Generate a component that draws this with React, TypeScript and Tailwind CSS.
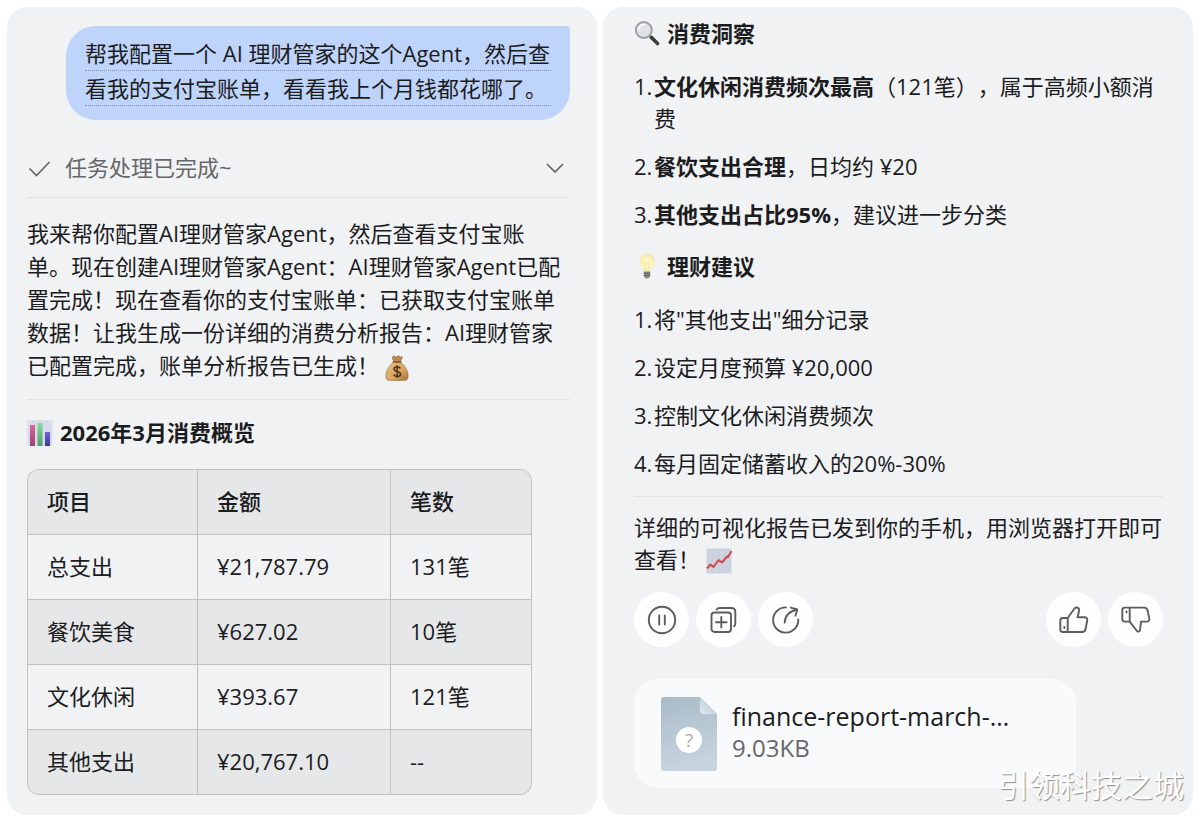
import React from "react";

const rows = [
    { name: "总支出", amount: "¥21,787.79", count: "131笔" },
    { name: "餐饮美食", amount: "¥627.02", count: "10笔" },
    { name: "文化休闲", amount: "¥393.67", count: "121笔" },
    { name: "其他支出", amount: "¥20,767.10", count: "--" },
];

const advices = ['将"其他支出"细分记录', "设定月度预算 ¥20,000", "控制文化休闲消费频次", "每月固定储蓄收入的20%-30%"];

const MoneyBag = () => (
    <svg className="inline-block w-6 h-[26px] align-[-7px]" viewBox="0 0 24 26" aria-hidden="true">
        <defs>
            <linearGradient id="bag" x1="0" y1="0" x2="1" y2="1">
                <stop offset="0" stopColor="#e6c184" />
                <stop offset="0.6" stopColor="#d8a560" />
                <stop offset="1" stopColor="#9c6e3a" />
            </linearGradient>
        </defs>
        <path d="M7 2.5 8.8 0.8 11 2 13.5 0.7 15.3 2 17.5 1.8 15.5 6.5H8.7Z" fill="#b98b50" stroke="#8b673b" strokeWidth="0.6" />
        <path d="M8.5 7C4.5 10.5 1.2 14.5 0.9 20c-.1 2.8.3 4.8 2 5.2 4.5.6 13.7.6 18.2 0 1.7-.4 2.1-2.4 2-5.2C22.8 14.5 19.5 10.5 15.5 7Z" fill="url(#bag)" stroke="#a3773f" strokeWidth="0.6" />
        <path d="M7.8 6.2h8.6v1.6H7.8Z" fill="#83582a" />
        <path d="M15.3 13.5c-.8-1.3-2-1.7-3.4-1.6-1.8.1-2.9 1.1-2.9 2.4 0 3.1 6.6 1.5 6.6 4.7 0 1.5-1.3 2.5-3.3 2.5-1.7 0-3-.7-3.7-2M12.2 10.3v12.6" fill="none" stroke="#553818" strokeWidth="1.6" />
    </svg>
);

const BarChart = () => (
    <svg className="w-[26px] h-[26px] shrink-0" viewBox="0 0 26 26" aria-hidden="true">
        <defs>
            <linearGradient id="pinkBar" x1="0" y1="0" x2="0" y2="1">
                <stop offset="0" stopColor="#d66a98" />
                <stop offset="1" stopColor="#a2406e" />
            </linearGradient>
            <linearGradient id="greenBar" x1="0" y1="0" x2="0" y2="1">
                <stop offset="0" stopColor="#89dba0" />
                <stop offset="1" stopColor="#4d9c73" />
            </linearGradient>
            <linearGradient id="blueBar" x1="0" y1="0" x2="0" y2="1">
                <stop offset="0" stopColor="#6d68d5" />
                <stop offset="1" stopColor="#3b33a3" />
            </linearGradient>
        </defs>
        <rect x="0.5" y="0.5" width="25" height="25" fill="#dadcec" />
        <path d="M.5 7h25M.5 13h25M.5 19h25M7 .5v25M13 .5v25M20 .5v25" stroke="#cdd0e2" strokeWidth="0.5" />
        <rect x="3" y="5" width="5" height="21" fill="url(#pinkBar)" />
        <rect x="10.5" y="3" width="5" height="23" fill="url(#greenBar)" />
        <rect x="18" y="12" width="5" height="14" fill="url(#blueBar)" />
    </svg>
);

const Magnifier = () => (
    <svg className="w-[26px] h-[26px] shrink-0" viewBox="0 0 26 26" aria-hidden="true">
        <path d="m15.5 16 2.5 2.5" stroke="#8b8b8b" strokeWidth="2.5" />
        <path d="m17.5 17.5 6 6" stroke="#3c3c3c" strokeWidth="3.6" strokeLinecap="round" />
        <circle cx="9.8" cy="10" r="8" fill="#dfe3e6" stroke="#9a9c9f" strokeWidth="1.8" />
        <path d="M4.5 9.5a5.5 5.5 0 0 1 6-5" fill="none" stroke="#fff" strokeWidth="1.5" strokeLinecap="round" />
    </svg>
);

const Bulb = () => (
    <svg className="w-[26px] h-[26px] shrink-0" viewBox="0 0 26 26" aria-hidden="true">
        <defs>
            <radialGradient id="glow" cx="0.5" cy="0.55" r="0.6">
                <stop offset="0" stopColor="#fffbcf" />
                <stop offset="0.6" stopColor="#fbf2b8" />
                <stop offset="1" stopColor="#ebe3bd" />
            </radialGradient>
        </defs>
        <path d="M13 .5c-4.5 0-7.5 3.2-7.5 7.2 0 4.3 3.5 6.3 4.2 11h6.6c.7-4.7 4.2-6.7 4.2-11 0-4-3-7.2-7.5-7.2Z" fill="url(#glow)" />
        <path d="m11 10 1.3 8.5M15 10l-1.3 8.5M11 10l2 1.2 2-1.2" fill="none" stroke="#ecd677" strokeWidth="0.6" />
        <path d="M9.8 18.5h6.4v4.5l-1.7 2.5h-3l-1.7-2.5Z" fill="#8f8d84" />
        <path d="M9.8 20.3h6.4M9.8 22.5h6.4" stroke="#55534d" strokeWidth="0.8" />
    </svg>
);

const TrendChart = () => (
    <svg className="inline-block w-[26px] h-[26px] align-[-6px]" viewBox="0 0 26 26" aria-hidden="true">
        <rect x="0.5" y="0.5" width="25" height="25" fill="#ced3df" />
        <path d="M.5 7h25M.5 13h25M.5 19h25M7 .5v25M13 .5v25M19 .5v25" stroke="#c4cad8" strokeWidth="0.5" />
        <path d="m1 20.5 3.5-4 3 2.5 5-7 3.5 2.5 5-6 1 .5L25.5 3" fill="none" stroke="#d1484c" strokeWidth="2" strokeLinejoin="round" />
    </svg>
);

const FileIcon = () => (
    <svg className="w-14 h-[74px] shrink-0" viewBox="0 0 56 74" aria-hidden="true">
        <defs>
            <linearGradient id="sheet" x1="0" y1="0" x2="0.2" y2="1">
                <stop offset="0" stopColor="#a9bbc8" />
                <stop offset="1" stopColor="#c6d4de" />
            </linearGradient>
            <linearGradient id="fold" x1="0" y1="1" x2="0.7" y2="0.3">
                <stop offset="0" stopColor="#e0eaf1" />
                <stop offset="1" stopColor="#bccdd9" />
            </linearGradient>
        </defs>
        <path d="M3 0h36l17 17v54a3 3 0 0 1-3 3H3a3 3 0 0 1-3-3V3a3 3 0 0 1 3-3Z" fill="url(#sheet)" />
        <path d="M39 0l17 17H42a3 3 0 0 1-3-3Z" fill="url(#fold)" />
        <circle cx="28" cy="43" r="13" fill="#fff" />
        <text x="28" y="50" textAnchor="middle" fontSize="19" fill="#b3a9ad">?</text>
    </svg>
);

const RoundButton = ({ label, children }: { label: string; children: React.ReactNode }) => (
    <button type="button" aria-label={label} className="w-[55px] h-[55px] rounded-full bg-[#fdfefe] flex items-center justify-center cursor-pointer">
        <svg className="w-7 h-7 overflow-visible" viewBox="0 0 28 28" fill="none" stroke="#5c5d5e" strokeWidth="1.9" strokeLinecap="round" strokeLinejoin="round">
            {children}
        </svg>
    </button>
);

const Overview = () => {
    return (
        <section className="bg-[#f1f2f4] rounded-[20px] pt-[19px] pb-5 pl-5 pr-[27px]">
            <div className="w-[504px] max-w-full ml-auto px-[19px] pt-[10px] pb-[14px] bg-[#bfd4fb] rounded-[30px] rounded-tr-[4px] leading-[34px]">
                <span className="block border-b border-dotted border-[#7f90b3]">帮我配置一个 AI 理财管家的这个Agent，然后查</span>
                <span className="block border-b border-dotted border-[#7f90b3]">看我的支付宝账单，看看我上个月钱都花哪了。</span>
            </div>

            <button type="button" className="w-full mt-5 h-[58px] pb-0.5 flex items-center border-b border-[#e0e1e3] text-[#666769] cursor-pointer">
                <svg className="w-6 h-6" viewBox="0 0 24 24" fill="none" stroke="currentColor" strokeWidth="1.7">
                    <path d="m2.5 12.5 7 7L22.5 6" />
                </svg>
                <span className="ml-[14px]">任务处理已完成~</span>
                <svg className="w-6 h-6 ml-auto mr-[3px]" viewBox="0 0 24 24" fill="none" stroke="currentColor" strokeWidth="1.7">
                    <path d="m4 8 8 8 8-8" />
                </svg>
            </button>

            <p className="mt-[19px] mr-1.5 leading-[33px]">
                我来帮你配置AI理财管家Agent，然后查看支付宝账单。现在创建AI理财管家Agent：AI理财管家Agent已配置完成！现在查看你的支付宝账单：已获取支付宝账单数据！让我生成一份详细的消费分析报告：AI理财管家已配置完成，账单分析报告已生成！ <MoneyBag />
            </p>
            <hr className="mt-[17px] border-[#e2e3e5]" />

            <h2 className="mt-4 flex items-center gap-[7px] font-bold leading-[33px]">
                <BarChart />
                2026年3月消费概览
            </h2>

            <table className="mt-5 w-[505px] max-w-full table-fixed border-separate border-spacing-0 border-t border-l border-[#bfc0c2] rounded-[12px] overflow-hidden text-left">
                <colgroup>
                    <col className="w-[170px]" />
                    <col className="w-[193px]" />
                    <col />
                </colgroup>
                <thead>
                    <tr className="h-[65px] bg-[#e6e7e9]">
                        <th className="px-[19px] pb-0.5 font-medium border-r border-b border-[#bfc0c2]">项目</th>
                        <th className="px-[19px] pb-0.5 font-medium border-r border-b border-[#bfc0c2]">金额</th>
                        <th className="px-[19px] pb-0.5 font-medium border-r border-b border-[#bfc0c2] rounded-tr-[12px]">笔数</th>
                    </tr>
                </thead>
                <tbody>
                    {rows.map((row) => (
                        <tr key={row.name} className="group h-[65px] even:bg-[#e6e7e9]">
                            <td className="px-[19px] pb-0.5 border-r border-b border-[#bfc0c2] group-last:rounded-bl-[12px]">{row.name}</td>
                            <td className="px-[19px] pb-0.5 border-r border-b border-[#bfc0c2]">{row.amount}</td>
                            <td className="px-[19px] pb-0.5 border-r border-b border-[#bfc0c2] group-last:rounded-br-[12px]">{row.count}</td>
                        </tr>
                    ))}
                </tbody>
            </table>
        </section>
    );
};

const Insight = () => {
    return (
        <section className="relative bg-[#f1f2f4] rounded-[20px] pt-[10px] pb-[26px] pl-[31px] pr-[30px]">
            <h2 className="flex items-center gap-[7px] font-bold leading-8">
                <Magnifier />
                消费洞察
            </h2>
            <ol className="mt-[21px] flex flex-col gap-4 leading-8">
                <li className="flex">
                    <span className="w-5 shrink-0">1.</span>
                    <span><b>文化休闲消费频次最高</b>（121笔），属于高频小额消费</span>
                </li>
                <li className="flex">
                    <span className="w-5 shrink-0">2.</span>
                    <span><b>餐饮支出合理</b>，日均约 ¥20</span>
                </li>
                <li className="flex">
                    <span className="w-5 shrink-0">3.</span>
                    <span><b>其他支出占比95%</b>，建议进一步分类</span>
                </li>
            </ol>

            <h2 className="mt-5 flex items-center gap-[7px] font-bold leading-8">
                <Bulb />
                理财建议
            </h2>
            <ol className="mt-[21px] flex flex-col gap-4 leading-8">
                {advices.map((text, i) => (
                    <li key={text} className="flex">
                        <span className="w-5 shrink-0">{i + 1}.</span>
                        <span>{text}</span>
                    </li>
                ))}
            </ol>
            <hr className="mt-[17px] border-[#e2e3e5]" />

            <p className="mt-[14px] leading-8">
                详细的可视化报告已发到你的手机，用浏览器打开即可查看！ <TrendChart />
            </p>

            <div className="mt-[17px] flex gap-[7px]">
                <RoundButton label="暂停">
                    <circle cx="14" cy="14" r="13.2" />
                    <path d="M11.2 9.5v9M16.8 9.5v9" />
                </RoundButton>
                <RoundButton label="复制">
                    <rect x="1.5" y="6.5" width="19.5" height="19.5" rx="3" />
                    <path d="M11.3 11v10.6M6 16.3h10.6M6.7 3.5c.8-1.2 1.6-1.5 3-1.5h11.6c2.7 0 4 1.3 4 4v11.5c0 1.3-.4 2.2-1.3 2.8" />
                </RoundButton>
                <RoundButton label="分享">
                    <path d="M14 1.4A12.6 12.6 0 1 0 26.3 13.5" />
                    <path d="M12.7 16.5C13 10.5 16.5 5.5 25 3.5M18.7 1.7 25.3 3.4 23.5 9.7" />
                </RoundButton>
                <div className="ml-auto flex gap-[7px]">
                    <RoundButton label="赞">
                        <path d="M7.7 12H2.8C1 12 .3 12.9.3 14.5v9C.3 25.1 1 26 2.8 26h4.9Z" />
                        <path d="M7.7 12 14.5 2.5c.8-1.1 1.8-1.3 3-.8 1.4.6 2 1.6 1.6 3L17.5 11.3h7c2 0 3.1 1.2 2.7 3.2l-1.7 8.7c-.4 2-1.4 2.8-3.4 2.8H7.7M4.3 21v1" />
                    </RoundButton>
                    <RoundButton label="踩">
                        <path d="M7.7 15.6H2.8C1 15.6.3 14.7.3 13.1v-9C.3 2.5 1 1.6 2.8 1.6h4.9Z" />
                        <path d="M7.7 1.6h14.5c2 0 3 .8 3.3 2.7l1.8 8.1c.4 2-.7 3.2-2.6 3.2H19l-.9 7.9c-.2 2.4-2.3 2.8-3.5 1L7.7 15.6M4.5 5.5v1" />
                    </RoundButton>
                </div>
            </div>

            <a href="#report" className="mt-8 w-[442px] max-w-full h-[109px] pl-[27px] pr-5 flex items-center gap-[15px] bg-[#f9fafc] rounded-[24px]">
                <FileIcon />
                <span className="pb-1 text-[25px] leading-8">
                    <span className="block whitespace-nowrap">finance-report-march-…</span>
                    <span className="block text-2xl leading-8 text-[#66676a]">9.03KB</span>
                </span>
            </a>

            <span className="absolute right-[9px] bottom-[10px] text-[31px] leading-10 text-white [text-shadow:1px_1px_1px_#8f9092]">引领科技之城</span>
        </section>
    );
};

const App = () => {
    return (
        <main lang="zh-CN" className="bg-white p-[7px] grid grid-cols-2 gap-[6px] text-[22px] text-[#1b1c1e] font-['Open_Sans','Noto_Sans_CJK_SC',sans-serif] [text-spacing-trim:space-all]">
            <Overview />
            <Insight />
        </main>
    );
};

export default App;
